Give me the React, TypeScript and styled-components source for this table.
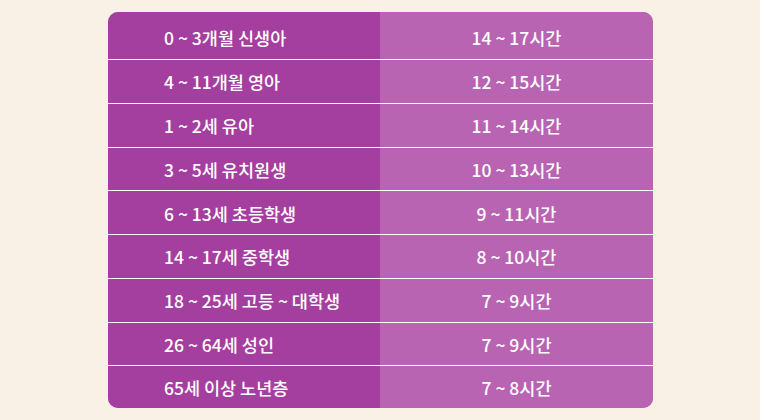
import React from 'react';
import styled, { createGlobalStyle } from 'styled-components';

const rows = [
  ['0 ~ 3개월 신생아', '14 ~ 17시간'],
  ['4 ~ 11개월 영아', '12 ~ 15시간'],
  ['1 ~ 2세 유아', '11 ~ 14시간'],
  ['3 ~ 5세 유치원생', '10 ~ 13시간'],
  ['6 ~ 13세 초등학생', '9 ~ 11시간'],
  ['14 ~ 17세 중학생', '8 ~ 10시간'],
  ['18 ~ 25세 고등 ~ 대학생', '7 ~ 9시간'],
  ['26 ~ 64세 성인', '7 ~ 9시간'],
  ['65세 이상 노년층', '7 ~ 8시간'],
];

const GlobalStyle = createGlobalStyle`
  html, body {
    margin: 0;
    padding: 0;
    background: #f9f0e6;
  }
  body {
    font-family: "Noto Sans CJK KR", "Noto Sans", sans-serif;
  }
`;

const Page = styled.div`
  width: 760px;
  height: 420px;
  padding-top: 12px;
  box-sizing: border-box;
  display: flex;
  justify-content: center;
`;

const Table = styled.div`
  width: 545px;
  margin-left: 1px;
  border-radius: 10px;
  overflow: hidden;
  display: grid;
  grid-template-columns: 272px 1fr;
  grid-template-rows: 48px repeat(7, 43.75px) 42px;
  align-self: flex-start;
  background: #b864b3;
`;

const Cell = styled.div<{ $left?: boolean; $last?: boolean; $first?: boolean }>`
  display: flex;
  align-items: center;
  justify-content: ${(p) => (p.$left ? 'flex-start' : 'center')};
  padding-left: ${(p) => (p.$left ? '56px' : '0')};
  padding-top: ${(p) => (p.$first ? '4px' : '1px')};
  background: ${(p) => (p.$left ? '#a53f9f' : '#b864b3')};
  border-bottom: ${(p) => (p.$last ? 'none' : '1px solid #ffffff')};
  color: #ffffff;
  font-size: 17.5px;
  font-weight: 500;
  box-sizing: border-box;
`;

export default function App() {
  return (
    <>
      <GlobalStyle />
      <Page>
        <Table>
          {rows.map(([age, hours], i) => {
            const first = i === 0;
            const last = i === rows.length - 1;
            return (
              <React.Fragment key={age}>
                <Cell $left $first={first} $last={last}>
                  {age}
                </Cell>
                <Cell $first={first} $last={last}>
                  {hours}
                </Cell>
              </React.Fragment>
            );
          })}
        </Table>
      </Page>
    </>
  );
}
